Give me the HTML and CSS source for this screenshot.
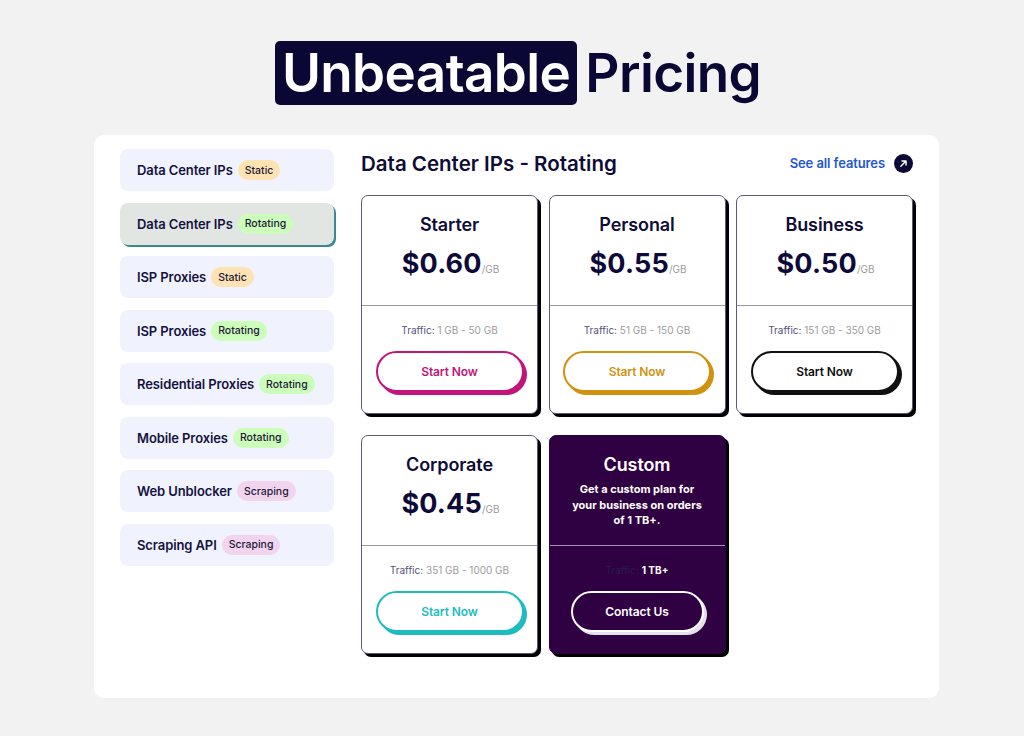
FILE: index.html
```html
<!DOCTYPE html>
<html lang="en">
<head>
<meta charset="utf-8">
<title>Unbeatable Pricing</title>
<link rel="stylesheet" href="styles.css">
</head>
<body>
<header class="hero">
  <h1 class="hero-title"><span class="hero-mark">Unbeatable</span> <span class="hero-rest">Pricing</span></h1>
</header>
<main class="panel">
  <nav class="sidebar">
    <a class="side-item"><span class="side-name">Data Center IPs</span><span class="badge badge-static">Static</span></a>
    <a class="side-item is-active"><span class="side-name">Data Center IPs</span><span class="badge badge-rotating">Rotating</span></a>
    <a class="side-item"><span class="side-name">ISP Proxies</span><span class="badge badge-static">Static</span></a>
    <a class="side-item"><span class="side-name">ISP Proxies</span><span class="badge badge-rotating">Rotating</span></a>
    <a class="side-item"><span class="side-name">Residential Proxies</span><span class="badge badge-rotating">Rotating</span></a>
    <a class="side-item"><span class="side-name">Mobile Proxies</span><span class="badge badge-rotating">Rotating</span></a>
    <a class="side-item"><span class="side-name">Web Unblocker</span><span class="badge badge-scraping">Scraping</span></a>
    <a class="side-item"><span class="side-name">Scraping API</span><span class="badge badge-scraping">Scraping</span></a>
  </nav>
  <section class="content">
    <div class="content-head">
      <h2 class="content-title">Data Center IPs - Rotating</h2>
      <a class="features-link">See all features
        <span class="features-icon"><svg viewBox="0 0 20 20" width="19" height="19"><circle cx="10" cy="10" r="10" fill="#0c0835"/><path d="M7.2 12.8 L12.6 7.4 M8.4 7.3 H12.7 V11.6" stroke="#fff" stroke-width="1.5" fill="none" stroke-linecap="round" stroke-linejoin="round"/></svg></span>
      </a>
    </div>
    <div class="cards">
      <article class="card">
        <div class="card-top">
          <h3 class="card-title">Starter</h3>
          <div class="price"><span class="price-num">$0.60</span><span class="price-unit">/GB</span></div>
        </div>
        <div class="card-bottom">
          <p class="traffic"><span class="traffic-label">Traffic:</span> 1 GB - 50 GB</p>
          <a class="btn btn-magenta">Start Now</a>
        </div>
      </article>
      <article class="card">
        <div class="card-top">
          <h3 class="card-title">Personal</h3>
          <div class="price"><span class="price-num">$0.55</span><span class="price-unit">/GB</span></div>
        </div>
        <div class="card-bottom">
          <p class="traffic"><span class="traffic-label">Traffic:</span> 51 GB - 150 GB</p>
          <a class="btn btn-gold">Start Now</a>
        </div>
      </article>
      <article class="card">
        <div class="card-top">
          <h3 class="card-title">Business</h3>
          <div class="price"><span class="price-num">$0.50</span><span class="price-unit">/GB</span></div>
        </div>
        <div class="card-bottom">
          <p class="traffic"><span class="traffic-label">Traffic:</span> 151 GB - 350 GB</p>
          <a class="btn btn-black">Start Now</a>
        </div>
      </article>
      <article class="card">
        <div class="card-top">
          <h3 class="card-title">Corporate</h3>
          <div class="price"><span class="price-num">$0.45</span><span class="price-unit">/GB</span></div>
        </div>
        <div class="card-bottom">
          <p class="traffic"><span class="traffic-label">Traffic:</span> 351 GB - 1000 GB</p>
          <a class="btn btn-teal">Start Now</a>
        </div>
      </article>
      <article class="card card-custom">
        <div class="card-top">
          <h3 class="card-title">Custom</h3>
          <p class="custom-desc">Get a custom plan for your business on orders of 1 TB+.</p>
        </div>
        <div class="card-bottom">
          <p class="traffic"><span class="traffic-label">Traffic:</span> <b class="traffic-strong">1 TB+</b></p>
          <a class="btn btn-white">Contact Us</a>
        </div>
      </article>
    </div>
  </section>
</main>
</body>
</html>
```
FILE: styles.css
```css
* { box-sizing: border-box; }
html, body { margin: 0; padding: 0; }
body {
  background: #f2f2f2;
  font-family: "Inter", "Noto Sans", "Liberation Sans", sans-serif;
  color: #0f0c38;
  width: 1024px;
  height: 736px;
  overflow: hidden;
}
a { text-decoration: none; }
h1, h2, h3, p { margin: 0; }

.hero { padding-top: 41px; display: flex; justify-content: center; }
.hero-title {
  display: flex;
  align-items: center;
  gap: 8px;
  font-size: 53px;
  font-weight: 600;
  letter-spacing: -0.6px;
  line-height: 64px;
  margin-left: 12px;
}
.hero-mark {
  background: #0b0734;
  color: #fff;
  border-radius: 5px;
  padding: 0 7px;
  height: 64px;
  display: inline-flex;
  align-items: center;
}
.hero-rest { color: #0b0734; }

.panel {
  width: 845px;
  height: 563px;
  margin: 30px 0 0 94px;
  background: #fff;
  border-radius: 10px;
  padding: 14px 26px 0 26px;
  display: flex;
  gap: 27px;
}

.sidebar { width: 214px; display: flex; flex-direction: column; gap: 11.5px; }
.side-item {
  height: 42px;
  background: #f0f3fd;
  border-radius: 8px;
  display: flex;
  align-items: center;
  padding-left: 17px;
  gap: 5px;
  color: #15123f;
  font-size: 13px;
  font-weight: 600;
  letter-spacing: -0.1px;
}
.side-item.is-active {
  background: #e2e6e2;
  box-shadow: 2px 2px 0 #3b8793;
}
.badge {
  height: 20px;
  padding: 0 7px;
  border-radius: 10px;
  font-size: 10.5px;
  font-weight: 500;
  display: inline-flex;
  align-items: center;
  color: #1d1a38;
  letter-spacing: 0;
}
.badge-static { background: #fde3b3; }
.badge-rotating { background: #ccfdba; }
.badge-scraping { background: #f2d4ee; }

.content { width: 552px; }
.content-head {
  height: 28px;
  display: flex;
  align-items: center;
  justify-content: space-between;
  margin-bottom: 18px;
}
.content-title { font-size: 20.5px; font-weight: 600; color: #0f0c38; letter-spacing: 0; }
.features-link {
  display: flex;
  align-items: center;
  gap: 9px;
  color: #2456d6;
  font-size: 13px;
  font-weight: 600;
  letter-spacing: -0.1px;
}
.features-icon { display: inline-flex; width: 19px; height: 19px; }

.cards {
  display: grid;
  grid-template-columns: repeat(3, 1fr);
  column-gap: 10.5px;
  row-gap: 21px;
}
.card {
  height: 219px;
  background: #fff;
  border: 1px solid #5c5882;
  border-radius: 7px;
  box-shadow: 3px 3px 0 #000;
  display: flex;
  flex-direction: column;
}
.card-top {
  height: 110px;
  border-bottom: 1px solid #9a9a9a;
  display: flex;
  flex-direction: column;
  align-items: center;
  padding-top: 17px;
}
.card-title { font-size: 18px; font-weight: 600; line-height: 24px; color: #0f0c38; letter-spacing: -0.1px; }
.price { display: flex; align-items: baseline; margin-top: 9px; line-height: 36px; margin-left: 2px; }
.price-num { font-size: 27px; font-weight: 700; color: #0d0a3a; letter-spacing: 0.2px; }
.price-unit { font-size: 10px; color: #9b9b9b; margin-left: 0; }

.card-bottom {
  flex: 1;
  display: flex;
  flex-direction: column;
  align-items: center;
  padding-top: 17px;
}
.traffic { font-size: 10px; line-height: 14px; color: #9c9c9c; }
.traffic-label { color: #55527c; }
.btn {
  margin-top: 14px;
  width: 148px;
  height: 41px;
  border-radius: 21px;
  border: 2px solid;
  display: flex;
  align-items: center;
  justify-content: center;
  font-size: 12px;
  font-weight: 600;
  letter-spacing: -0.1px;
  background: #fff;
}
.btn-magenta { color: #c0167a; border-color: #c0167a; box-shadow: 3px 3px 0 #c0167a; }
.btn-gold { color: #d0920f; border-color: #d0920f; box-shadow: 3px 3px 0 #d0920f; }
.btn-black { color: #111; border-color: #111; box-shadow: 3px 3px 0 #111; }
.btn-teal { color: #1fbcbf; border-color: #1fbcbf; box-shadow: 3px 3px 0 #1fbcbf; }

.card-custom { background: #300142; border-color: #300142; }
.card-custom .card-top { border-bottom-color: #a48fb0; padding-top: 17px; }
.card-custom .card-title { color: #fff; }
.custom-desc {
  color: #fff;
  font-size: 11px;
  font-weight: 700;
  line-height: 15.5px;
  text-align: center;
  padding: 0 20px;
  margin-top: 5px;
}
.card-custom .traffic-label { color: #2a1a4f; }
.traffic-strong { color: #fff; font-weight: 700; }
.btn-white {
  width: 133px;
  background: #300142;
  color: #fff;
  border-color: #fff;
  box-shadow: 3px 3px 0 #e6e0ea;
}
```
